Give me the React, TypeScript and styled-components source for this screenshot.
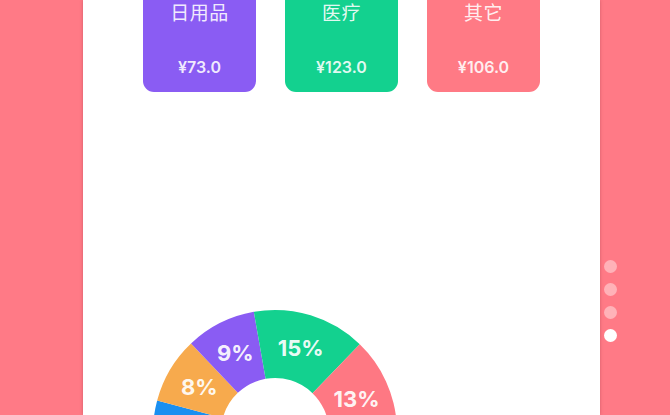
import React from 'react'
import styled, { createGlobalStyle } from 'styled-components'

const GlobalStyle = createGlobalStyle`
  html, body {
    margin: 0;
    padding: 0;
    width: 670px;
    height: 415px;
    overflow: hidden;
    background: #ff7a86;
  }
  body {
    font-family: "Inter", "Noto Sans CJK SC", sans-serif;
  }
`

const CARDS = [
  { id: 'daily', name: '日用品', amount: 73, color: '#8a5cf3' },
  { id: 'medical', name: '医疗', amount: 123, color: '#13d18f' },
  { id: 'other', name: '其它', amount: 106, color: '#ff7a85' },
]

// angles in degrees, clockwise from 12 o'clock
const SLICES = [
  { id: 'blue', label: '', color: '#1a8ff0', from: -140, to: -75 },
  { id: 'orange', label: '8%', color: '#f7aa4d', from: -75, to: -43.5 },
  { id: 'purple', label: '9%', color: '#8a5cf3', from: -43.5, to: -10 },
  { id: 'green', label: '15%', color: '#13d18f', from: -10, to: 44 },
  { id: 'pink', label: '13%', color: '#fe7883', from: 44, to: 130 },
]

const CX = 130
const CY = 130
const R_OUT = 122
const R_IN = 54

const point = (r: number, deg: number) => {
  const rad = (deg * Math.PI) / 180
  return [CX + r * Math.sin(rad), CY - r * Math.cos(rad)]
}

const slicePath = (from: number, to: number) => {
  const [x1, y1] = point(R_OUT, from)
  const [x2, y2] = point(R_OUT, to)
  const [x3, y3] = point(R_IN, to)
  const [x4, y4] = point(R_IN, from)
  const large = to - from > 180 ? 1 : 0
  return `M${x1} ${y1} A${R_OUT} ${R_OUT} 0 ${large} 1 ${x2} ${y2} L${x3} ${y3} A${R_IN} ${R_IN} 0 ${large} 0 ${x4} ${y4} Z`
}

const Donut = () => (
  <ChartSvg width={260} height={260} viewBox="0 0 260 260">
    {SLICES.map((s) => (
      <path key={s.id} d={slicePath(s.from, s.to)} fill={s.color} />
    ))}
    {SLICES.filter((s) => s.label).map((s) => {
      const mid = s.id === 'pink' ? 68 : (s.from + s.to) / 2
      const [x, y] = point((R_OUT + R_IN) / 2, mid)
      return (
        <SliceLabel key={s.id} x={x} y={y + 8} textAnchor="middle">
          {s.label}
        </SliceLabel>
      )
    })}
  </ChartSvg>
)

const App = () => {
  const pages = [0, 1, 2, 3]
  const current = 3

  return (
    <>
      <GlobalStyle />
      <Screen>
        <Gutter />
        <Panel>
          <CardRow>
            {CARDS.map((card) => (
              <Card key={card.id} $bg={card.color}>
                <CardTitle>{card.name}</CardTitle>
                <CardAmount>¥{card.amount.toFixed(1)}</CardAmount>
              </Card>
            ))}
          </CardRow>
          <ChartArea>
            <Donut />
          </ChartArea>
        </Panel>
        <Pager>
          {pages.map((p) => (
            <Dot key={p} $active={p === current} />
          ))}
        </Pager>
      </Screen>
    </>
  )
}

export default App

const Screen = styled.div`
  display: flex;
  flex-direction: row;
  width: 670px;
  height: 415px;
  overflow: hidden;
  background: #ff7a86;
`

const Gutter = styled.div`
  width: 83px;
  flex-shrink: 0;
`

const Panel = styled.div`
  width: 517px;
  flex-shrink: 0;
  background: #ffffff;
  box-shadow: 0 0 3px rgba(120, 40, 50, 0.35);
  display: flex;
  flex-direction: column;
`

const CardRow = styled.div`
  display: flex;
  flex-direction: row;
  gap: 29px;
  padding-left: 60px;
  margin-top: -18px;
`

const Card = styled.div<{ $bg: string }>`
  width: 113px;
  height: 110px;
  border-radius: 11px;
  background: ${(p) => p.$bg};
  display: flex;
  flex-direction: column;
  align-items: center;
  color: #ffffff;
`

const CardTitle = styled.div`
  margin-top: 22px;
  font-size: 19px;
  line-height: 20px;
  letter-spacing: 0.5px;
  color: rgba(255, 255, 255, 0.9);
`

const CardAmount = styled.div`
  margin-top: 33px;
  font-size: 16px;
  line-height: 20px;
  font-weight: 600;
  color: rgba(255, 255, 255, 0.88);
`

const ChartArea = styled.div`
  padding-left: 62px;
  margin-top: 210px;
`

const ChartSvg = styled.svg`
  display: block;
`

const SliceLabel = styled.text`
  font-family: "Inter", "Noto Sans", sans-serif;
  font-size: 22px;
  font-weight: 700;
  fill: rgba(255, 255, 255, 0.93);
`

const Pager = styled.div`
  display: flex;
  flex-direction: column;
  gap: 10px;
  padding-top: 260px;
  padding-left: 4px;
`

const Dot = styled.div<{ $active: boolean }>`
  width: 13px;
  height: 13px;
  border-radius: 50%;
  background: ${(p) => (p.$active ? '#ffffff' : 'rgba(255, 255, 255, 0.42)')};
`
